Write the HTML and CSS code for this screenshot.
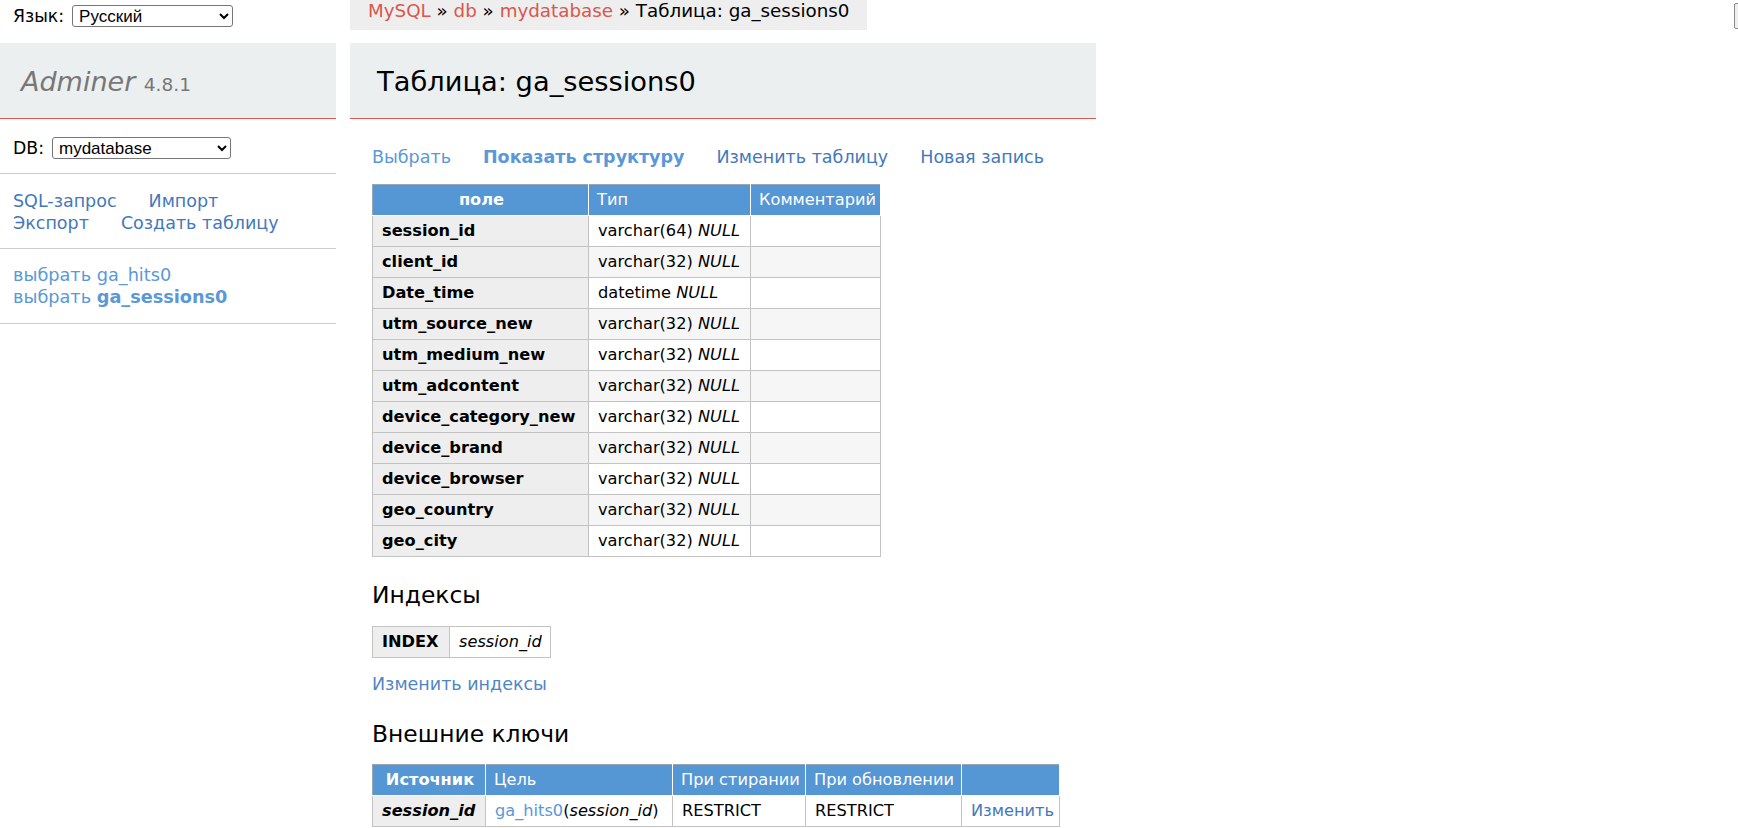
FILE: index.html
```html
<!DOCTYPE html>
<html lang="ru">
<head>
<meta charset="utf-8">
<title>Таблица: ga_sessions0 - mydatabase - Adminer</title>
<link rel="stylesheet" href="styles.css">
</head>
<body>
<div class="page">
  <aside class="menu">
    <form class="lang">
      <label class="lang-label">Язык:</label>
      <select class="sel sel-lang"><option>Русский</option></select>
    </form>
    <h1 class="logo"><a class="logo-name" href="#">Adminer</a> <span class="version">4.8.1</span></h1>
    <form class="db-row">
      <label class="db-label">DB:</label>
      <select class="sel sel-db"><option>mydatabase</option></select>
    </form>
    <div class="menu-links">
      <div class="links-row"><a class="lnk-dark" href="#">SQL-запрос</a><a class="lnk-dark" href="#">Импорт</a></div>
      <div class="links-row"><a class="lnk-dark" href="#">Экспорт</a><a class="lnk-dark" href="#">Создать таблицу</a></div>
    </div>
    <ul class="tables">
      <li><a class="lnk-light" href="#">выбрать</a> <a class="lnk-light" href="#">ga_hits0</a></li>
      <li><a class="lnk-light" href="#">выбрать</a> <a class="lnk-light active" href="#">ga_sessions0</a></li>
    </ul>
  </aside>

  <main class="main">
    <div class="crumb-wrap">
      <p class="breadcrumb"><a href="#">MySQL</a> » <a href="#">db</a> » <a href="#">mydatabase</a> » Таблица: ga_sessions0</p>
    </div>
    <h2 class="title">Таблица: ga_sessions0</h2>

    <div class="content">
      <p class="tabs">
        <a class="lnk-light" href="#">Выбрать</a>
        <a class="lnk-light active" href="#">Показать структуру</a>
        <a class="lnk-dark" href="#">Изменить таблицу</a>
        <a class="lnk-dark" href="#">Новая запись</a>
      </p>

      <table class="grid struct">
        <colgroup><col class="c1"><col class="c2"><col class="c3"></colgroup>
        <thead>
          <tr><th>поле</th><td>Тип</td><td>Комментарий</td></tr>
        </thead>
        <tbody>
          <tr><th>session_id</th><td>varchar(64) <i>NULL</i></td><td></td></tr>
          <tr><th>client_id</th><td>varchar(32) <i>NULL</i></td><td></td></tr>
          <tr><th>Date_time</th><td>datetime <i>NULL</i></td><td></td></tr>
          <tr><th>utm_source_new</th><td>varchar(32) <i>NULL</i></td><td></td></tr>
          <tr><th>utm_medium_new</th><td>varchar(32) <i>NULL</i></td><td></td></tr>
          <tr><th>utm_adcontent</th><td>varchar(32) <i>NULL</i></td><td></td></tr>
          <tr><th>device_category_new</th><td>varchar(32) <i>NULL</i></td><td></td></tr>
          <tr><th>device_brand</th><td>varchar(32) <i>NULL</i></td><td></td></tr>
          <tr><th>device_browser</th><td>varchar(32) <i>NULL</i></td><td></td></tr>
          <tr><th>geo_country</th><td>varchar(32) <i>NULL</i></td><td></td></tr>
          <tr><th>geo_city</th><td>varchar(32) <i>NULL</i></td><td></td></tr>
        </tbody>
      </table>

      <h3 class="sub sub-idx">Индексы</h3>
      <table class="grid idx">
        <colgroup><col class="i1"><col class="i2"></colgroup>
        <tbody>
          <tr><th>INDEX</th><td><i>session_id</i></td></tr>
        </tbody>
      </table>
      <p class="edit-idx"><a class="lnk-mid" href="#">Изменить индексы</a></p>

      <h3 class="sub sub-fk">Внешние ключи</h3>
      <table class="grid fk">
        <colgroup><col class="f1"><col class="f2"><col class="f3"><col class="f4"><col class="f5"></colgroup>
        <thead>
          <tr><th>Источник</th><td>Цель</td><td>При стирании</td><td>При обновлении</td><td></td></tr>
        </thead>
        <tbody>
          <tr><th><i>session_id</i></th><td><a class="lnk-light" href="#">ga_hits0</a>(<i>session_id</i>)</td><td>RESTRICT</td><td>RESTRICT</td><td><a class="lnk-dark" href="#">Изменить</a></td></tr>
        </tbody>
      </table>
    </div>
  </main>
</div>
<span class="edge-widget"></span>
</body>
</html>
```

FILE: styles.css
```css
* { box-sizing: border-box; }

html, body {
  margin: 0;
  padding: 0;
  overflow: hidden;
}

body {
  width: 1738px;
  height: 828px;
  position: relative;
  font-family: "DejaVu Sans", Verdana, sans-serif;
  font-size: 18px;
  line-height: 1.25;
  color: #000;
  background: #fff;
}

a { text-decoration: none; }

.lnk-dark { color: #4478bb; }
.lnk-light { color: #5a98d8; }
.lnk-mid { color: #4f86c6; }
.active { font-weight: bold; }

.page {
  display: flex;
  align-items: flex-start;
}

/* ---------- sidebar ---------- */
.menu {
  width: 336px;
  flex: none;
}

.lang {
  display: flex;
  align-items: center;
  height: 32px;
  margin: 0;
  padding-left: 13px;
  font-size: 17.3px;
  line-height: 20px;
}

.lang-label { margin-right: 8px; }

.sel {
  height: 22px;
  font: 17px "Liberation Sans", Arial, sans-serif;
  color: #000;
  background: #fff;
  border: 1px solid #767676;
  border-radius: 3px;
  padding: 0 2px;
}

.sel-lang { width: 161px; }
.sel-db { width: 179px; }

.logo {
  margin: 11px 0 0;
  height: 76px;
  padding: 22px 21px 0;
  background: #eceff0;
  border-bottom: 1px solid #d9574c;
  font-size: 27px;
  line-height: 33.75px;
  font-weight: normal;
  white-space: nowrap;
}

.logo-name {
  color: #777;
  font-style: italic;
}

.version {
  color: #777;
  font-size: 18.5px;
}

.db-row {
  display: flex;
  align-items: center;
  margin: 0;
  padding: 18px 0 14px 13px;
  border-bottom: 1px solid #ccc;
  font-size: 17.3px;
  line-height: 20px;
}

.db-label { margin-right: 8px; }

.menu-links {
  padding: 16px 13px 14px;
  border-bottom: 1px solid #ccc;
  font-size: 17.5px;
  line-height: 22px;
}

.links-row {
  display: flex;
  gap: 32px;
  white-space: nowrap;
}

.tables {
  list-style: none;
  margin: 0;
  padding: 14.5px 13px 15px;
  border-bottom: 1px solid #ccc;
  font-size: 17.7px;
  line-height: 22px;
  white-space: nowrap;
}

/* ---------- main ---------- */
.main {
  margin-left: 14px;
  width: 746px;
  flex: none;
}

.crumb-wrap {
  display: flex;
}

.breadcrumb {
  margin: 0;
  height: 30px;
  padding: 0 18px;
  background: #eee;
  font-size: 18.3px;
  line-height: 22px;
  white-space: nowrap;
}

.breadcrumb a { color: #d9574c; }

.title {
  margin: 13px 0 0;
  height: 76px;
  padding: 22px 27px 0;
  background: #eceff0;
  border-bottom: 1px solid #d9574c;
  font-size: 27.3px;
  line-height: 33.75px;
  font-weight: normal;
  white-space: nowrap;
}

.content {
  display: flex;
  flex-direction: column;
  align-items: flex-start;
  padding-left: 22px;
}

.tabs {
  display: flex;
  gap: 32px;
  margin: 26.5px 0 0;
  font-size: 17.5px;
  line-height: 22.5px;
  white-space: nowrap;
}

.sub {
  margin: 0;
  font-size: 23.4px;
  line-height: 29.25px;
  font-weight: normal;
}

.sub-idx { margin-top: 24px; }
.sub-fk { margin-top: 24.5px; }

.edit-idx {
  margin: 15px 0 0;
  font-size: 17.5px;
  line-height: 22.5px;
}

/* ---------- tables ---------- */
.grid {
  border-collapse: collapse;
  table-layout: fixed;
  font-size: 16.2px;
  line-height: 20px;
}

.grid th,
.grid td {
  border: 1px solid #c3c3c3;
  padding: 5px 9px;
  text-align: left;
  white-space: nowrap;
  overflow: hidden;
  font-weight: normal;
}

.grid tbody th {
  background: #eee;
  font-weight: bold;
}

.grid tbody tr:nth-child(2n) td { background: #f6f6f6; }

.grid thead th,
.grid thead td {
  background: #5596d5;
  color: #fff;
  border-color: #fff;
  border-top-color: #9aa7b3;
  padding-left: 8px;
  padding-right: 6px;
}

.grid thead th {
  text-align: center;
  font-weight: bold;
  border-left-color: #9aa7b3;
}

.struct { width: 508px; margin-top: 16px; }
.c1 { width: 216px; }
.c2 { width: 162px; }
.c3 { width: 130px; }

.idx { width: 178px; margin-top: 15.5px; }
.i1 { width: 77px; }
.i2 { width: 101px; }

.fk { width: 687px; margin-top: 14.5px; }
.f1 { width: 113px; }
.f2 { width: 187px; }
.f3 { width: 133px; }
.f4 { width: 156px; }
.f5 { width: 98px; }

/* partially visible control at the right edge */
.edge-widget {
  position: absolute;
  top: 3px;
  left: 1734px;
  width: 12px;
  height: 26px;
  border: 1px solid #8a8a8a;
  border-radius: 2px;
  background: #efefef;
}
```
